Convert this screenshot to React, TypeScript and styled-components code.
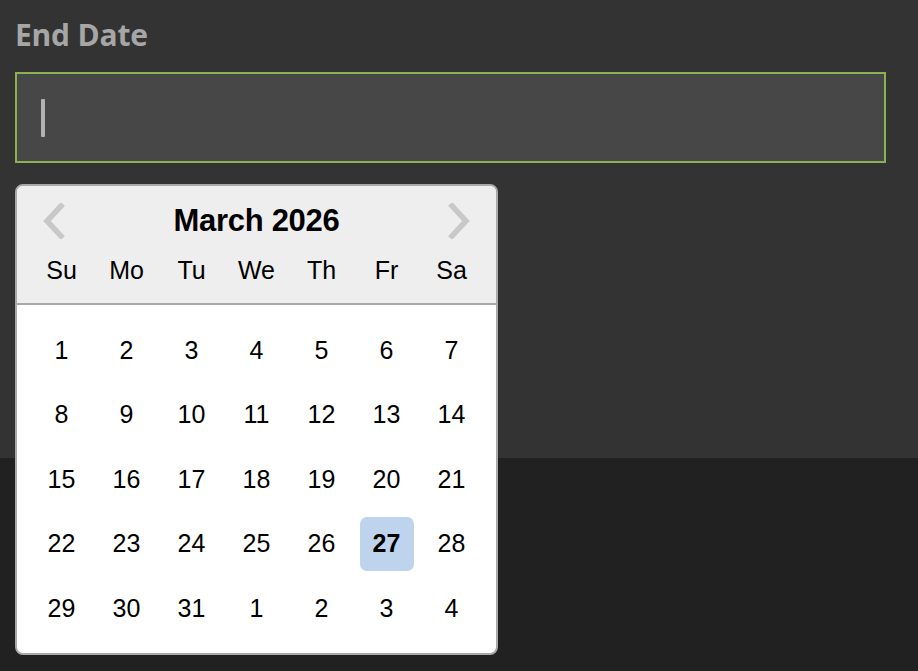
import React from "react";
import styled, { createGlobalStyle } from "styled-components";

const Global = createGlobalStyle`
  html, body { margin: 0; padding: 0; background: #212121; }
  body { font-family: "Liberation Sans", Arial, sans-serif; }
  * { box-sizing: border-box; }
`;

const Page = styled.div`
  position: relative;
  min-height: 671px;
  display: flex;
  flex-direction: column;
`;

const Panel = styled.div`
  height: 458px;
  background: #333333;
  padding: 13px 32px 0 15px;
`;

const Label = styled.div`
  font-family: "Open Sans", sans-serif;
  font-weight: 700;
  font-size: 30px;
  line-height: 44px;
  color: #a6a6a6;
  letter-spacing: -0.2px;
`;

const InputBox = styled.div`
  margin-top: 15px;
  width: 871px;
  height: 91px;
  border: 2px solid #8cb151;
  background: #474747;
  display: flex;
  align-items: center;
  padding-left: 24px;
`;

const Caret = styled.div`
  width: 4px;
  height: 38px;
  background: #b2b2b2;
  border-radius: 1px;
`;

const Popover = styled.div`
  position: absolute;
  left: 15px;
  top: 184px;
  width: 483px;
  height: 471px;
  background: #ffffff;
  border: 2px solid #a9a9a9;
  border-radius: 8px;
  overflow: hidden;
  z-index: 2;
  display: flex;
  flex-direction: column;
`;

const Header = styled.div`
  height: 119px;
  flex-shrink: 0;
  background: #eeeeee;
  border-bottom: 2px solid #a9a9a9;
  padding: 0 12px;
`;

const TitleRow = styled.div`
  height: 70px;
  display: flex;
  align-items: center;
  justify-content: space-between;
  padding: 0 13px;
`;

const Title = styled.div`
  font-weight: 700;
  font-size: 31px;
  color: #000;
  letter-spacing: -0.3px;
`;

const Arrow = styled.svg`
  width: 24px;
  height: 36px;
  display: block;
`;

const Grid = styled.div`
  display: grid;
  grid-template-columns: repeat(7, 65px);
  justify-content: center;
`;

const DayName = styled.div`
  text-align: center;
  font-size: 25px;
  line-height: 28px;
  color: #000;
`;

const Body = styled.div`
  flex: 1;
  padding: 13px 12px 0;
`;

const Cell = styled.div`
  height: 64.5px;
  display: flex;
  align-items: center;
  justify-content: center;
`;

const Day = styled.div<{ $selected?: boolean }>`
  width: 54px;
  height: 54px;
  border-radius: 7px;
  display: flex;
  align-items: center;
  justify-content: center;
  font-size: 25px;
  color: #000;
  font-weight: ${(p) => (p.$selected ? 700 : 400)};
  background: ${(p) => (p.$selected ? "#bed4ed" : "transparent")};
`;

const names = ["Su", "Mo", "Tu", "We", "Th", "Fr", "Sa"];
const days = [
  ...Array.from({ length: 31 }, (_, i) => i + 1),
  1, 2, 3, 4,
];

export default function App() {
  return (
    <>
      <Global />
      <Page>
        <Panel>
          <Label>End Date</Label>
          <InputBox>
            <Caret />
          </InputBox>
        </Panel>
        <Popover>
          <Header>
            <TitleRow>
              <Arrow viewBox="0 0 24 36">
                <path d="M19 3 L5 18 L19 33" fill="none" stroke="#c8c8c8" strokeWidth="5.5" strokeLinecap="square" />
              </Arrow>
              <Title>March 2026</Title>
              <Arrow viewBox="0 0 24 36">
                <path d="M5 3 L19 18 L5 33" fill="none" stroke="#c8c8c8" strokeWidth="5.5" strokeLinecap="square" />
              </Arrow>
            </TitleRow>
            <Grid>
              {names.map((n) => (
                <DayName key={n}>{n}</DayName>
              ))}
            </Grid>
          </Header>
          <Body>
            <Grid>
              {days.map((d, i) => (
                <Cell key={i}>
                  <Day $selected={i === 26}>{d}</Day>
                </Cell>
              ))}
            </Grid>
          </Body>
        </Popover>
      </Page>
    </>
  );
}
